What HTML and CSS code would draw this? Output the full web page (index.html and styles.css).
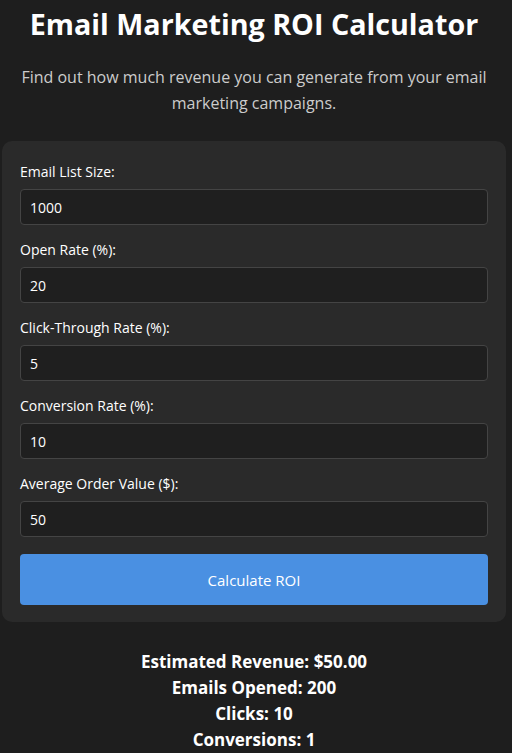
FILE: index.html
```html
<!DOCTYPE html>
<html lang="en">
<head>
<meta charset="utf-8">
<title>Email Marketing ROI Calculator</title>
<link rel="stylesheet" href="styles.css">
</head>
<body>
<main class="page">
  <h1 class="title">Email Marketing ROI Calculator</h1>
  <p class="intro">Find out how much revenue you can generate from your email marketing campaigns.</p>
  <form class="card">
    <div class="field">
      <label class="label" for="list">Email List Size:</label>
      <input class="input" id="list" type="text" value="1000">
    </div>
    <div class="field">
      <label class="label" for="open">Open Rate (%):</label>
      <input class="input" id="open" type="text" value="20">
    </div>
    <div class="field">
      <label class="label" for="ctr">Click-Through Rate (%):</label>
      <input class="input" id="ctr" type="text" value="5">
    </div>
    <div class="field">
      <label class="label" for="conv">Conversion Rate (%):</label>
      <input class="input" id="conv" type="text" value="10">
    </div>
    <div class="field">
      <label class="label" for="aov">Average Order Value ($):</label>
      <input class="input" id="aov" type="text" value="50">
    </div>
    <button class="button" type="button">Calculate ROI</button>
  </form>
  <div class="results">
    <div>Estimated Revenue: $50.00</div>
    <div>Emails Opened: 200</div>
    <div>Clicks: 10</div>
    <div>Conversions: 1</div>
  </div>
</main>
</body>
</html>
```
FILE: styles.css
```css
html, body {
  margin: 0;
  background: #1e1e1e;
}
body {
  font-family: "Open Sans", "Liberation Sans", sans-serif;
  color: #ffffff;
}
.page {
  margin: 0 6px 0 2px;
  display: flex;
  flex-direction: column;
}
.title {
  margin: 0;
  padding-top: 4px;
  font-size: 28.7px;
  line-height: 40px;
  font-weight: 700;
  text-align: center;
}
.intro {
  margin: 20px 0 0;
  padding: 0 8px;
  font-size: 16px;
  line-height: 26px;
  color: #cccccc;
  text-align: center;
}
.card {
  margin-top: 25px;
  background: #2a2a2a;
  border-radius: 10px;
  padding: 20px 18px 17px;
  display: flex;
  flex-direction: column;
}
.field {
  display: flex;
  flex-direction: column;
  margin-bottom: 14px;
}
.label {
  font-size: 14px;
  line-height: 21px;
  margin-bottom: 7px;
  color: #ffffff;
}
.input {
  height: 36px;
  box-sizing: border-box;
  background: #1f1f1f;
  border: 1px solid #444444;
  border-radius: 4px;
  padding: 0 9px;
  font-family: inherit;
  font-size: 14px;
  color: #ffffff;
  outline: none;
}
.button {
  margin-top: 3px;
  height: 51px;
  border: none;
  border-radius: 4px;
  background: #4a90e2;
  color: #ffffff;
  font-family: inherit;
  font-size: 15px;
}
.results {
  margin-top: 27px;
  text-align: center;
  font-size: 17px;
  line-height: 26px;
  font-weight: 700;
}
```
